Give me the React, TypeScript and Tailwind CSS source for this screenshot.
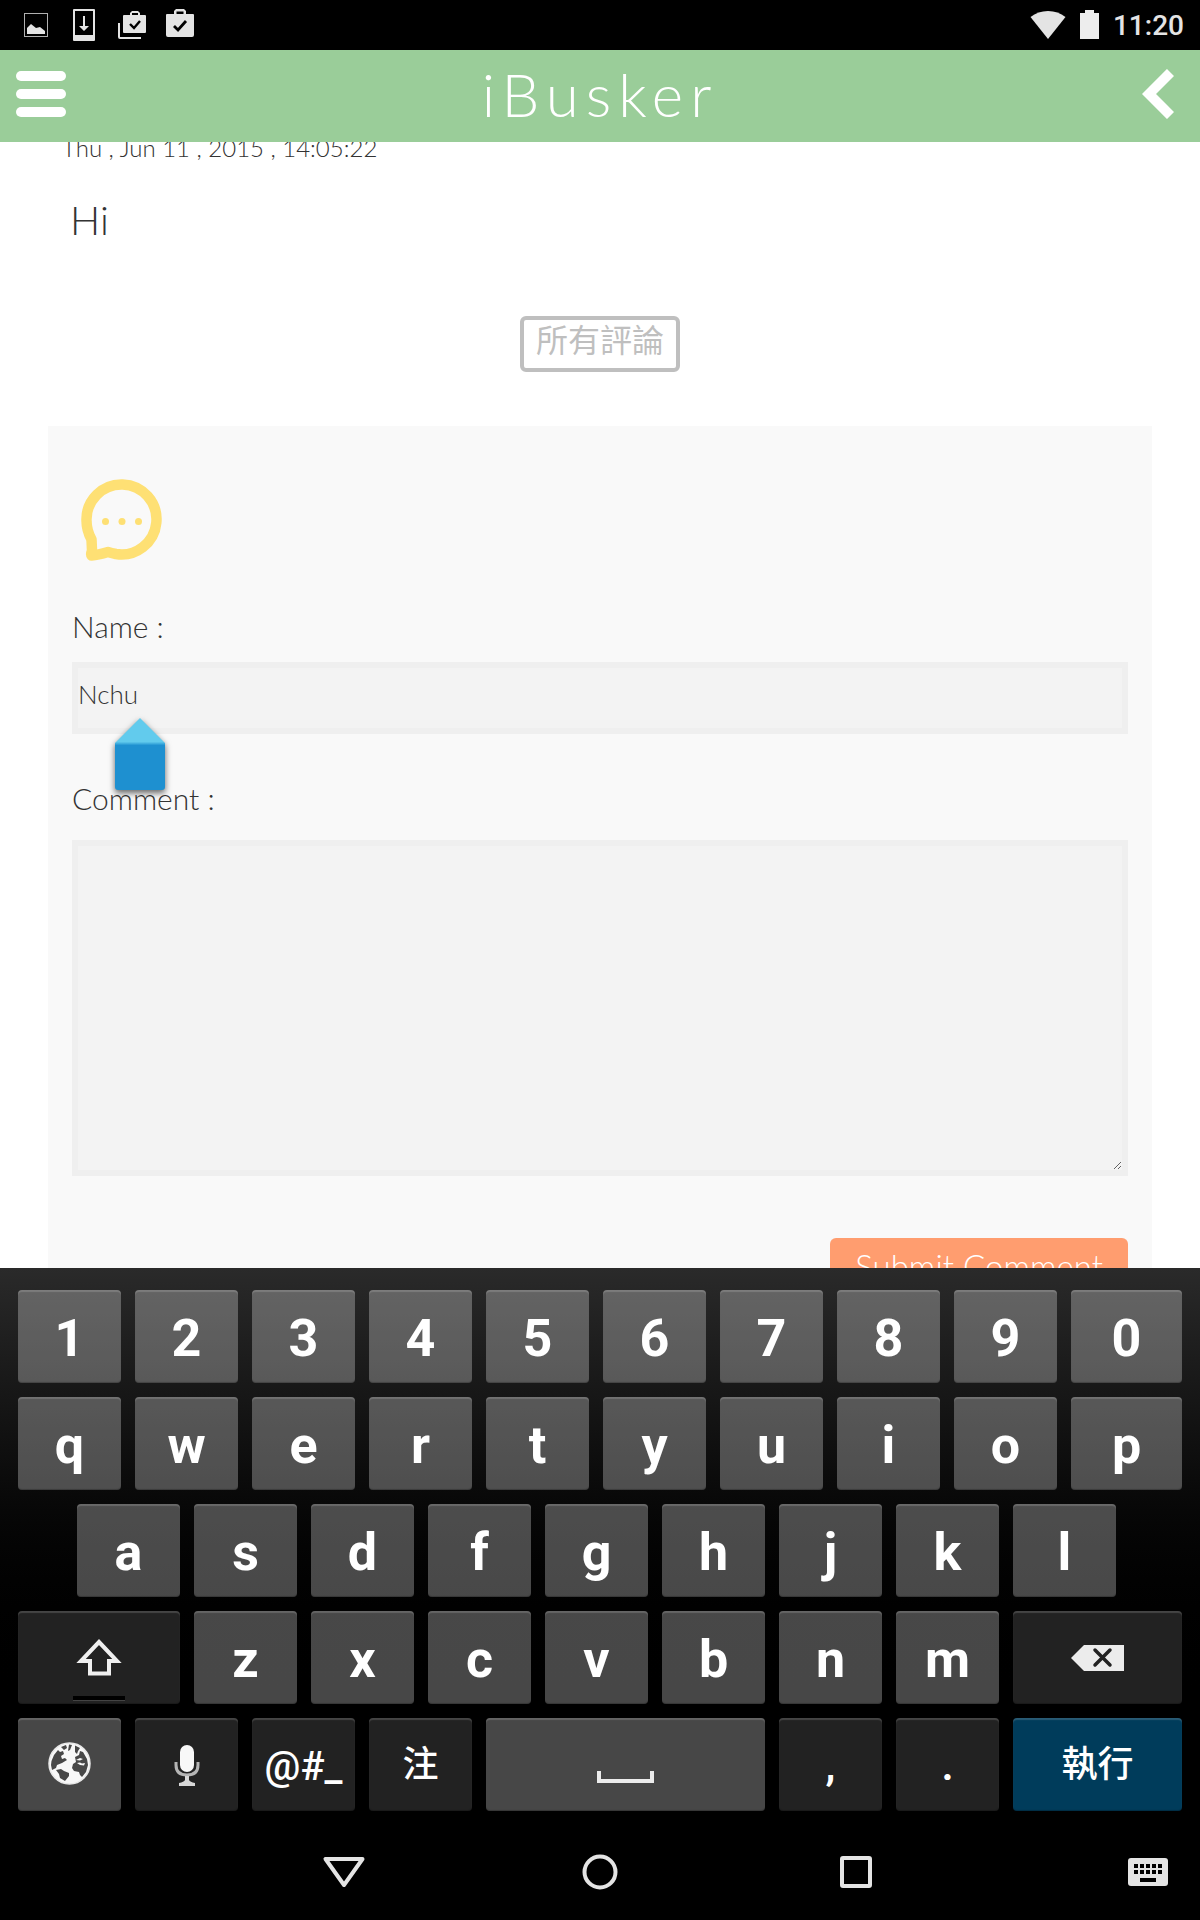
import React from 'react';

const LATIN = "font-['Lato','Noto_Sans_CJK_TC',sans-serif]";

function StatusBar() {
  return (
    <div className="flex h-[50px] shrink-0 items-center justify-between bg-black pr-4 pl-6 text-[#e4e4e4]">
      <div className="flex items-center">
        <svg className="mr-[25px] h-6 w-6" viewBox="0 0 24 24" fill="none" aria-hidden="true">
          <rect x="0.5" y="0.5" width="23" height="23" stroke="#b0b0b0" />
          <path d="M3 21v-6l4-4 5 4 4-1 5 4v3Z" fill="currentColor" />
        </svg>
        <svg className="mr-[23px] h-8 w-[22px]" viewBox="0 0 22 32" fill="currentColor" aria-hidden="true">
          <path fillRule="evenodd" d="M1 0h20q1 0 1 1v30q0 1-1 1H1q-1 0-1-1V1Q0 0 1 0ZM2 2v24h18V2Z" />
          <path d="M10 7h2v10h4l-5 5-5-5h4Z" />
        </svg>
        <svg className="mr-5 h-7 w-7" viewBox="0 0 28 28" fill="currentColor" aria-hidden="true">
          <path d="M0 12h2v14h21v2H2q-2 0-2-2Z" />
          <path fillRule="evenodd" d="M12 4V2l2-2h6l2 2v2h5q1 0 1 1v16q0 1-1 1H6q-1 0-1-1V5q0-1 1-1Zm2 0h6V2h-6Z" />
          <path d="m12 13 4 4 6-7" fill="none" stroke="#000" strokeWidth="2.4" />
        </svg>
        <svg className="mb-1 h-7 w-7" viewBox="0 0 28 28" fill="currentColor" aria-hidden="true">
          <path fillRule="evenodd" d="M8 5V2l2-2h8l2 2v3h7q1 0 1 1v20q0 2-2 2H2q-2 0-2-2V6q0-1 1-1Zm2.500 0h7V2.500h-7Z" />
          <path d="m8 17 4 4 8-9" fill="none" stroke="#000" strokeWidth="2.800" />
        </svg>
      </div>
      <div className="flex items-center">
        <svg className="mr-[14px] h-7 w-[36px]" viewBox="0 0 36 28" fill="currentColor" aria-hidden="true">
          <path d="M0.500 6Q8 0 18 0t17.500 6L18 28Z" />
        </svg>
        <svg className="mr-[14px] mb-px h-[29px] w-[19px]" viewBox="0 0 19 29" fill="#ededed" aria-hidden="true">
          <path d="M5 0h9v3h5v26H0V3h5Z" />
        </svg>
        <span className="pt-0.5 font-['Roboto',sans-serif] text-[28px] leading-8 font-medium">11:20</span>
      </div>
    </div>
  );
}

function Header() {
  return (
    <header className="z-10 grid h-[92px] shrink-0 grid-cols-[1fr_auto_1fr] items-center bg-[#9acd99] px-4 text-white">
      <button type="button" aria-label="Menu" className="flex w-[50px] flex-col gap-2 pb-1">
        <span className="h-[10px] rounded-full bg-white" />
        <span className="h-[10px] rounded-full bg-white" />
        <span className="h-[10px] rounded-full bg-white" />
      </button>
      <h1 className="pb-1 text-[60px] leading-[84px] font-light tracking-[7px]">iBusker</h1>
      <button type="button" aria-label="Back" className="mr-[10px] justify-self-end pb-1">
        <svg className="h-[50px] w-8" viewBox="0 0 32 50" fill="none" stroke="#fff" strokeWidth="10" aria-hidden="true">
          <path d="M28.500 3.500 7 25l21.500 21.500" />
        </svg>
      </button>
    </header>
  );
}

function CommentForm() {
  return (
    <form className="mx-12 flex flex-col bg-[#f9f9f9] px-6 pt-[52px] pb-12" onSubmit={(e) => e.preventDefault()}>
      <svg className="ml-2 h-[84px] w-[84px]" viewBox="0 0 84 84" fill="none" aria-hidden="true">
        <path
          d="M11.500 61.500C8 55 6.500 48 6.500 42.500a35 35 0 1 1 29.500 33.500q-5-1-8-2Q18 77 11.500 77.500q-1-1 .5-5Z"
          stroke="#fee074"
          strokeWidth="10.500"
          strokeLinejoin="round"
        />
        <g fill="#fee074">
          <circle cx="25.500" cy="43.500" r="3.500" />
          <circle cx="42" cy="43.500" r="3.500" />
          <circle cx="58.500" cy="43.500" r="3.500" />
        </g>
      </svg>
      <label htmlFor="name" className="mt-11 text-[30px] leading-10">Name :</label>
      <div className="relative mt-4">
        <input
          id="name"
          type="text"
          defaultValue="Nchu"
          className="block h-[72px] w-full border-[6px] border-[#efefef] bg-[#f3f3f3] pb-2 text-[26px] outline-none"
        />
        <svg
          className="absolute top-[56px] left-[43px] h-[76px] w-[50px] overflow-visible drop-shadow-[0_3px_3px_rgba(0,0,0,0.6)]"
          viewBox="0 0 50 76"
          aria-hidden="true"
        >
          <defs>
            <linearGradient id="handle" x1="0" y1="0" x2="0" y2="1">
              <stop offset="0.330" stopColor="#62cbed" />
              <stop offset="0.380" stopColor="#1e90d0" />
            </linearGradient>
          </defs>
          <path d="M25 0 50 25v44q0 3-3 3H3q-3 0-3-3V25Z" fill="url(#handle)" />
        </svg>
      </div>
      <label htmlFor="comment" className="mt-11 text-[30px] leading-10">Comment :</label>
      <textarea id="comment" className="mt-[22px] block h-[336px] w-full border-[6px] border-[#efefef] bg-[#f3f3f3] text-[26px] outline-none" />
      <button type="submit" className="mt-[62px] self-end rounded-md bg-[#ff9d6f] px-[25px] pt-2 pb-3 text-[33px] leading-10 text-white">
        Submit Comment
      </button>
    </form>
  );
}

type KeyProps = { children?: React.ReactNode; tone?: string; size?: string; span?: string; label?: string };

function Key({ children, tone = 'bg-white/[0.28]', size = 'pt-1 text-[52px]', span = 'flex-[103]', label }: KeyProps) {
  return (
    <button
      type="button"
      aria-label={label}
      className={`relative flex h-[93px] min-w-0 items-center justify-center rounded-[4px] leading-none font-bold text-white shadow-[inset_0_2px_1px_rgba(255,255,255,0.16),inset_0_-1px_1px_rgba(0,0,0,0.25)] ${tone} ${size} ${span}`}
    >
      {children}
    </button>
  );
}

const DARK = 'bg-[#222]';

function Keyboard() {
  return (
    <div className="flex shrink-0 flex-col gap-[14px] bg-linear-to-b from-[#2a2a2a] to-black to-80% px-[18px] pt-[22px] pb-[13px] font-['Roboto','Noto_Sans_CJK_TC',sans-serif]">
      {['1234567890', 'qwertyuiop'].map((row) => (
        <div key={row} className="flex gap-[14px]">
          {row.split('').map((c, i) => (
            <Key key={c} span={i === 9 ? 'flex-[111]' : 'flex-[103]'}>{c}</Key>
          ))}
        </div>
      ))}
      <div className="flex gap-[14px]">
        <span className="flex-[45]" />
        {'asdfghjkl'.split('').map((c) => <Key key={c}>{c}</Key>)}
        <span className="flex-[52]" />
      </div>
      <div className="flex gap-[14px]">
        <Key tone={DARK} size="pb-0.5" span="flex-[162]" label="Shift">
          <svg className="h-[38px] w-[50px]" viewBox="0 0 50 38" fill="none" stroke="#efefef" strokeWidth="4" aria-hidden="true">
            <path d="M25 4 43 23h-8v12.500H16V23H7Z" />
          </svg>
          <span className="absolute bottom-[3px] h-[5px] w-[52px] border-b border-[#444] bg-black" />
        </Key>
        {'zxcvbnm'.split('').map((c) => <Key key={c}>{c}</Key>)}
        <Key tone={DARK} size="pb-0" span="flex-[169]" label="Backspace">
          <svg className="h-[28px] w-[54px]" viewBox="0 0 54 28" aria-hidden="true">
            <path d="M0 14 13 1h40v26H13Z" fill="#ececec" />
            <path d="m24 6 15 15M39 6 24 21" stroke="#222" strokeWidth="3.500" strokeLinecap="round" />
          </svg>
        </Key>
      </div>
      <div className="flex gap-[14px]">
        <Key size="pb-0.5" label="Language">
          <svg className="h-[43px] w-[43px]" viewBox="0 0 43 43" aria-hidden="true">
            <circle cx="21.500" cy="21.500" r="20.500" fill="#f8f8f8" stroke="#e8e8e8" strokeWidth="1.500" />
            <g fill="#484848">
              <path d="M3.500 19 6 13l4-5 2 2 3-1 1 3-3 2 1 3 3-1 2 2-5 3-5 2-1 3-4 2-1-5Z" />
              <path d="m13 5 5-2 1 3-3 2Zm8-2.500 3 .5-2 5-2 1Zm6 1 5 2.500-2 3-1 3-2-2Z" />
              <path d="m8 28 5-1 3 2 5 2v3l-4 5-5-3-1-4Z" />
              <path d="m27 15 4-2 1-4 3 1 4 7 1 6-2 7-4 5-2-2-1-3-5-1-2-3 1-4 3-2Z" />
            </g>
            <path d="m28 18 4-2 3 1-3 1.500Zm1 3 3-.5 2 1 3-.5-1 2.500-4-.5Z" fill="#f8f8f8" />
          </svg>
        </Key>
        <Key tone={DARK} size="pt-0.5" label="Voice input">
          <svg className="h-[42px] w-[26px]" viewBox="0 0 26 42" fill="none" aria-hidden="true">
            <rect x="6" y="0" width="14" height="27" rx="7" fill="#f8f8f8" />
            <path d="M2 17v3q0 10 11 10t11-10v-3" stroke="#b5b5b5" strokeWidth="3" />
            <path d="M11 31h4v4q1 2 6 3v3H5v-3q5-1 6-3Z" fill="#d8d8d8" />
          </svg>
        </Key>
        <Key tone={DARK} size="pt-1 text-[40px]"><span className="font-medium">@#_</span></Key>
        <Key tone={DARK} size="text-[36px]"><span className="font-medium">注</span></Key>
        <Key span="flex-[279]" label="Space">
          <svg className="mt-5 h-3 w-[57px]" viewBox="0 0 57 12" fill="none" stroke="#ececec" strokeWidth="4" aria-hidden="true">
            <path d="M2 0v10h53V0" />
          </svg>
        </Key>
        <Key tone={DARK} size="pt-1 text-[40px]">,</Key>
        <Key tone={DARK} size="pt-1 text-[40px]">.</Key>
        <Key tone="bg-[#003c5b]" size="text-[36px]" span="flex-[169]"><span className="font-medium">執行</span></Key>
      </div>
    </div>
  );
}

function NavigationBar() {
  return (
    <nav className="grid h-24 shrink-0 grid-cols-[1fr_256px_256px_256px_1fr] items-center bg-black text-[#e4e4e4]">
      <span />
      <button type="button" aria-label="Hide keyboard" className="justify-self-center">
        <svg className="h-8 w-11" viewBox="0 0 44 32" fill="none" stroke="currentColor" strokeWidth="4" strokeLinejoin="round" aria-hidden="true">
          <path d="M3.500 3h37L22 29Z" />
        </svg>
      </button>
      <button type="button" aria-label="Home" className="justify-self-center">
        <svg className="h-9 w-9" viewBox="0 0 36 36" fill="none" stroke="currentColor" strokeWidth="4" aria-hidden="true">
          <circle cx="18" cy="18" r="15.500" />
        </svg>
      </button>
      <button type="button" aria-label="Recent apps" className="justify-self-center">
        <span className="block h-8 w-8 rounded-[3px] border-4 border-[#e4e4e4]" />
      </button>
      <button type="button" aria-label="Switch keyboard" className="mr-8 justify-self-end">
        <svg className="h-7 w-10" viewBox="0 0 40 28" aria-hidden="true">
          <rect width="40" height="28" rx="3" fill="currentColor" />
          <path d="M6 8h28M6 14h28" stroke="#000" strokeWidth="4" strokeDasharray="4 2" />
          <path d="M12 22h16" stroke="#000" strokeWidth="4" />
        </svg>
      </button>
    </nav>
  );
}

export default function App() {
  return (
    <div className={`flex h-screen flex-col bg-white font-light text-[#333] ${LATIN}`}>
      <StatusBar />
      <Header />
      <main className="min-h-0 flex-1 overflow-hidden">
        <p className="-mt-[14px] ml-[62px] text-[24px] leading-10">Thu , Jun 11 , 2015 , 14:05:22</p>
        <p className="mt-6 ml-[70px] text-[40px] leading-[56px]">Hi</p>
        <div className="mt-[68px] mb-[54px] flex justify-center">
          <button type="button" className="h-14 rounded-md border-4 border-[#bfbfbf] px-3 pb-2 text-[32px] leading-10 font-normal text-[#bfbfbf]">
            所有評論
          </button>
        </div>
        <CommentForm />
      </main>
      <Keyboard />
      <NavigationBar />
    </div>
  );
}
